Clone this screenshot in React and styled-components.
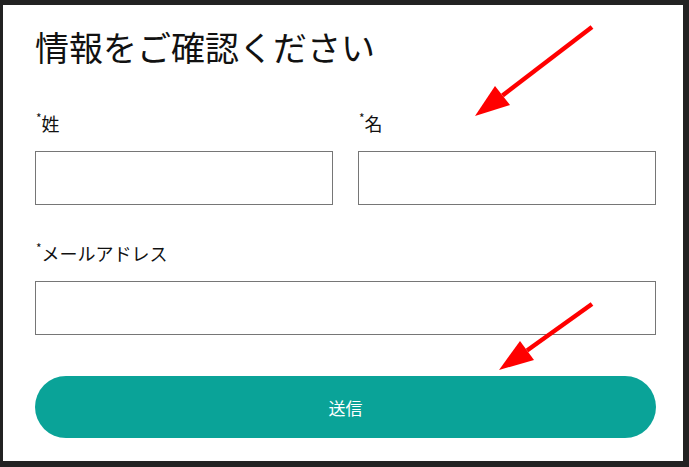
import React from "react";
import styled, { createGlobalStyle } from "styled-components";

const GlobalStyle = createGlobalStyle`
  html, body {
    margin: 0;
    padding: 0;
    background: #222222;
  }
  body {
    font-family: "Noto Sans CJK JP", "Noto Sans", sans-serif;
  }
`;

const Frame = styled.div`
  position: relative;
  width: 689px;
  height: 467px;
  box-sizing: border-box;
  padding: 5px 6px 6px 3px;
  background: #222222;
`;

const Card = styled.form`
  height: 100%;
  box-sizing: border-box;
  background: #ffffff;
  padding: 18px 27px 0 32px;
  display: flex;
  flex-direction: column;
`;

const Title = styled.h1`
  margin: 0;
  font-size: 34px;
  font-weight: 400;
  line-height: 48px;
  color: #111111;
  letter-spacing: 0;
`;

const Row = styled.div`
  display: grid;
  grid-template-columns: ${(p) => (p.$cols === 2 ? "1fr 1fr" : "1fr")};
  column-gap: 25px;
  margin-top: ${(p) => p.$top}px;
`;

const Field = styled.label`
  display: flex;
  flex-direction: column;
`;

const LabelText = styled.span`
  font-size: 18px;
  line-height: 24px;
  color: #111111;
  margin-bottom: 16px;
  padding-left: 1px;
`;

const Star = styled.span`
  font-size: 12px;
  vertical-align: top;
  line-height: 14px;
`;

const Input = styled.input`
  box-sizing: border-box;
  height: 54px;
  width: 100%;
  border: 1px solid #767676;
  border-radius: 0;
  background: #ffffff;
  margin: 0;
  font-family: inherit;
  font-size: 16px;
  padding: 0 10px;
  outline: none;
`;

const Submit = styled.button`
  margin-top: 41px;
  height: 62px;
  width: 100%;
  border: none;
  border-radius: 31px;
  background: #0aa398;
  color: #ffffff;
  font-family: inherit;
  font-size: 17px;
  cursor: pointer;
`;

const Arrows = styled.svg`
  position: absolute;
  left: 0;
  top: 0;
  pointer-events: none;
`;

function Arrow({ x1, y1, x2, y2, c1, c2 }) {
  return (
    <g>
      <line x1={x1} y1={y1} x2={(c1[0] + c2[0]) / 2} y2={(c1[1] + c2[1]) / 2} stroke="#ff0000" strokeWidth="4.5" />
      <polygon points={`${x2},${y2} ${c1[0]},${c1[1]} ${c2[0]},${c2[1]}`} fill="#ff0000" />
    </g>
  );
}

function TextField({ label }) {
  return (
    <Field>
      <LabelText>
        <Star>*</Star>
        {label}
      </LabelText>
      <Input type="text" />
    </Field>
  );
}

export default function App() {
  return (
    <>
      <GlobalStyle />
      <Frame>
        <Card onSubmit={(e) => e.preventDefault()}>
          <Title>情報をご確認ください</Title>
          <Row $cols={2} $top={40}>
            <TextField label="姓" />
            <TextField label="名" />
          </Row>
          <Row $top={36}>
            <TextField label="メールアドレス" />
          </Row>
          <Submit type="submit">送信</Submit>
        </Card>
        <Arrows width="689" height="467" viewBox="0 0 689 467">
          <Arrow x1={592} y1={27} x2={475} y2={116} c1={[495, 86]} c2={[510, 105]} />
          <Arrow x1={592} y1={304} x2={499} y2={370} c1={[520, 341]} c2={[534, 360]} />
        </Arrows>
      </Frame>
    </>
  );
}
